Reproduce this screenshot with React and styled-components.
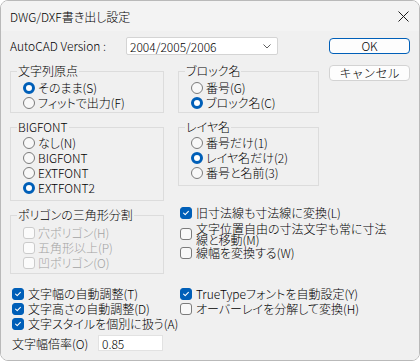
import React from "react";
import styled, { createGlobalStyle } from "styled-components";

const GlobalStyle = createGlobalStyle`
  html, body {
    margin: 0;
    padding: 0;
    background: #ffffff;
  }
  * {
    box-sizing: border-box;
  }
`;

const FONT = `"Noto Sans CJK JP", "Noto Sans", sans-serif`;

const Window = styled.div`
  width: 420px;
  height: 361px;
  border: 1px solid #b9b9b9;
  border-radius: 8px;
  overflow: hidden;
  display: flex;
  flex-direction: column;
  font-family: ${FONT};
  font-size: 12px;
  font-weight: 300;
  color: #000;
  font-feature-settings: "palt";
`;

const TitleBar = styled.div`
  height: 30px;
  flex: none;
  display: flex;
  align-items: center;
  justify-content: space-between;
  padding: 0 10px 0 9px;
  background: #f3f3f3;
`;

const Body = styled.div`
  flex: 1;
  background: #f0f0f0;
  padding: 6px 9px 0 9px;
  display: flex;
  flex-direction: column;
`;

const TopArea = styled.div`
  display: flex;
  justify-content: space-between;
  align-items: flex-start;
`;

const LeftTop = styled.div`
  width: 309px;
  display: flex;
  flex-direction: column;
  gap: 9px;
`;

const VersionRow = styled.div`
  display: flex;
  align-items: center;
  height: 18px;
`;

const VersionLabel = styled.span`
  width: 116px;
  line-height: 18px;
`;

const Combo = styled.div`
  width: 152px;
  height: 18px;
  background: #ffffff;
  border: 1px solid #d4d4d4;
  border-radius: 2px;
  display: flex;
  align-items: center;
  justify-content: space-between;
  padding: 0 6px 0 3px;
  font-feature-settings: normal;
`;

const GroupGrid = styled.div`
  display: grid;
  grid-template-columns: 154px 141px;
  column-gap: 14px;
  row-gap: 7px;
  align-items: start;
`;

const Group = styled.fieldset`
  margin: ${(p) => p.$mt || 0}px 0 0 0;
  min-width: 0;
  border: 1px solid #dcdcdc;
  padding: ${(p) => p.$pt}px 6px ${(p) => p.$pb}px 6px;
`;

const Legend = styled.legend`
  padding: 0 1px;
  line-height: 14px;
`;

const OptionList = styled.div`
  display: flex;
  flex-direction: column;
  padding-left: ${(p) => p.$indent ?? 6}px;
`;

const Option = styled.label`
  display: flex;
  align-items: center;
  gap: ${(p) => p.$gap ?? 3}px;
  min-height: 15px;
  line-height: ${(p) => p.$lh ?? 15}px;
  margin: ${(p) => p.$margin || "0"};
  color: ${(p) => (p.$disabled ? "#a3a3a3" : "#000")};
  white-space: nowrap;
`;

const Wrap = styled.span`
  white-space: normal;
  max-width: 194px;
`;

const Radio = styled.span`
  flex: none;
  width: 12px;
  height: 12px;
  border-radius: 50%;
  background: ${(p) => (p.$on ? "#ffffff" : "#f8f8f8")};
  border: ${(p) => (p.$on ? "3.5px solid #005fb8" : "1px solid #7b7b7b")};
`;

const CheckBox = styled.span`
  flex: none;
  width: 12px;
  height: 12px;
  border-radius: 3px;
  display: flex;
  align-items: center;
  justify-content: center;
  background: ${(p) => (p.$on ? "#005fb8" : p.$disabled ? "#fbfbfb" : "#f8f8f8")};
  border: 1px solid
    ${(p) => (p.$on ? "#005fb8" : p.$disabled ? "#cbcbcb" : "#7b7b7b")};
`;

const ButtonColumn = styled.div`
  width: 81px;
  margin-top: 1px;
  display: flex;
  flex-direction: column;
  gap: 11px;
`;

const Button = styled.button`
  height: 16px;
  padding: 0;
  font: inherit;
  line-height: 14px;
  color: #000;
  background: #fdfdfd;
  border: 1px solid ${(p) => (p.$primary ? "#005fb8" : "#d3d3d3")};
  border-radius: 4px;
  font-feature-settings: normal;
`;

const SplitRow = styled.div`
  display: grid;
  grid-template-columns: 154px 1fr;
  column-gap: 14px;
  align-items: start;
  margin-top: ${(p) => p.$mt}px;
`;

const RightList = styled.div`
  display: flex;
  flex-direction: column;
  padding-left: 2px;
`;

const RatioRow = styled.div`
  display: flex;
  align-items: center;
  height: 16px;
  margin-top: 4px;
  padding-left: 2px;
`;

const RatioLabel = styled.span`
  width: 86px;
`;

const RatioInput = styled.input`
  width: 65px;
  height: 16px;
  font: inherit;
  font-feature-settings: normal;
  padding: 0 3px;
  border: 1px solid #e2e2e2;
  background: #ffffff;
  outline: none;
`;

const Check = ({ on, disabled }) => (
  <CheckBox $on={on} $disabled={disabled}>
    {on && (
      <svg width="8" height="8" viewBox="0 0 8 8">
        <path
          d="M1.6 4.2 L3.2 5.7 L6.4 2.4"
          stroke="#ffffff"
          strokeWidth="1.1"
          fill="none"
          strokeLinecap="round"
          strokeLinejoin="round"
        />
      </svg>
    )}
  </CheckBox>
);

const RadioItem = ({ on, children }) => (
  <Option>
    <Radio $on={on} />
    {children}
  </Option>
);

const CheckItem = ({ on, disabled, children, gap = 4, ...rest }) => (
  <Option $gap={gap} $disabled={disabled} {...rest}>
    <Check on={on} disabled={disabled} />
    {children}
  </Option>
);

const RadioGroup = ({ title, items, selected, pt, pb }) => (
  <Group $pt={pt} $pb={pb}>
    <Legend>{title}</Legend>
    <OptionList>
      {items.map((label, i) => (
        <RadioItem key={label} on={i === selected}>
          {label}
        </RadioItem>
      ))}
    </OptionList>
  </Group>
);

export default function App() {
  return (
    <>
      <GlobalStyle />
      <Window>
        <TitleBar>
          <span>DWG/DXF書き出し設定</span>
          <svg width="11" height="11" viewBox="0 0 11 11">
            <path d="M0.5 0.5 L10.5 10.5 M10.5 0.5 L0.5 10.5" stroke="#1b1b1b" strokeWidth="1" />
          </svg>
        </TitleBar>
        <Body>
          <TopArea>
            <LeftTop>
              <VersionRow>
                <VersionLabel>AutoCAD Version :</VersionLabel>
                <Combo>
                  <span>2004/2005/2006</span>
                  <svg width="8" height="5" viewBox="0 0 8 5">
                    <path d="M0.5 0.5 L4 4 L7.5 0.5" stroke="#5f5f5f" strokeWidth="1" fill="none" />
                  </svg>
                </Combo>
              </VersionRow>
              <GroupGrid>
                <RadioGroup
                  title="文字列原点"
                  items={["そのまま(S)", "フィットで出力(F)"]}
                  selected={0}
                  pt={2}
                  pb={2}
                />
                <RadioGroup
                  title="ブロック名"
                  items={["番号(G)", "ブロック名(C)"]}
                  selected={1}
                  pt={2}
                  pb={2}
                />
                <RadioGroup
                  title="BIGFONT"
                  items={["なし(N)", "BIGFONT", "EXTFONT", "EXTFONT2"]}
                  selected={3}
                  pt={1}
                  pb={5}
                />
                <RadioGroup
                  title="レイヤ名"
                  items={["番号だけ(1)", "レイヤ名だけ(2)", "番号と名前(3)"]}
                  selected={1}
                  pt={1}
                  pb={5}
                />
              </GroupGrid>
            </LeftTop>
            <ButtonColumn>
              <Button $primary>OK</Button>
              <Button>キャンセル</Button>
            </ButtonColumn>
          </TopArea>

          <SplitRow $mt={4}>
            <Group $mt={3} $pt={3} $pb={3}>
              <Legend>ポリゴンの三角形分割</Legend>
              <OptionList>
                <CheckItem disabled gap={3}>穴ポリゴン(H)</CheckItem>
                <CheckItem disabled gap={3}>五角形以上(P)</CheckItem>
                <CheckItem disabled gap={3}>凹ポリゴン(O)</CheckItem>
              </OptionList>
            </Group>
            <RightList>
              <CheckItem on>旧寸法線も寸法線に変換(L)</CheckItem>
              <CheckItem $lh={11} $margin="3px 0 0 0">
                <Wrap>文字位置自由の寸法文字も常に寸法線と移動(M)</Wrap>
              </CheckItem>
              <CheckItem>線幅を変換する(W)</CheckItem>
            </RightList>
          </SplitRow>

          <SplitRow $mt={12}>
            <RightList>
              <CheckItem on>文字幅の自動調整(T)</CheckItem>
              <CheckItem on>文字高さの自動調整(D)</CheckItem>
              <CheckItem on>文字スタイルを個別に扱う(A)</CheckItem>
            </RightList>
            <RightList>
              <CheckItem on>TrueTypeフォントを自動設定(Y)</CheckItem>
              <CheckItem>オーバーレイを分解して変換(H)</CheckItem>
            </RightList>
          </SplitRow>

          <RatioRow>
            <RatioLabel>文字幅倍率(O)</RatioLabel>
            <RatioInput defaultValue="0.85" readOnly />
          </RatioRow>
        </Body>
      </Window>
    </>
  );
}
